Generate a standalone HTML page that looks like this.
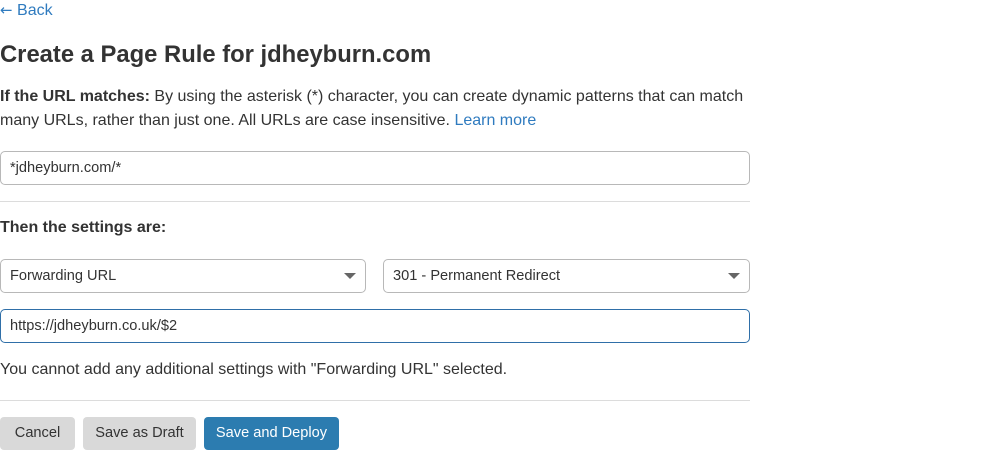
<!DOCTYPE html>
<html><head><style>
body{margin:0;width:986px;height:450px;overflow:hidden;background:#fff;font-family:"Liberation Sans",sans-serif;color:#333;font-size:16px;}
.a{position:absolute;white-space:nowrap}
.box{position:absolute;border:1px solid #b8b8b8;border-radius:5px;box-sizing:border-box;height:34px;line-height:32px;padding-left:9px;font-size:14.6px;color:#333}
.caret{position:absolute;right:9px;top:13px;width:0;height:0;border-left:6px solid transparent;border-right:6px solid transparent;border-top:6px solid #666}
.hr{position:absolute;left:0;width:750px;height:1px;background:#dcdcdc}
.btn{position:absolute;top:417px;height:33px;line-height:33px;border-radius:4px;text-align:center;font-size:14.6px;box-sizing:border-box}
</style></head><body>
<div class="a" style="left:0;top:1px;color:#2f7bbf;font-size:16px"><span style="font-family:'DejaVu Sans';font-size:15px">←</span> Back</div>
<div class="a" style="left:0;top:41px;font-size:23.8px;font-weight:bold;color:#333">Create a Page Rule for jdheyburn.com</div>
<div class="a" style="left:0;top:85px;line-height:24px;font-size:16px"><b>If the URL matches:</b> By using the asterisk (*) character, you can create dynamic patterns that can match<br>many URLs, rather than just one. All URLs are case insensitive. <span style="color:#2f7bbf">Learn more</span></div>
<div class="box" style="left:0;top:151px;width:750px">*jdheyburn.com/*</div>
<div class="hr" style="top:201px"></div>
<div class="a" style="left:0;top:219px;font-weight:bold;font-size:16px">Then the settings are:</div>
<div class="box" style="left:0;top:259px;width:366px">Forwarding URL<div class="caret"></div></div>
<div class="box" style="left:383px;top:259px;width:367px">301 - Permanent Redirect<div class="caret"></div></div>
<div class="box" style="left:0;top:309px;width:750px;border-color:#2f6fa8">https://jdheyburn.co.uk/$2</div>
<div class="a" style="left:0;top:361px;font-size:16px">You cannot add any additional settings with "Forwarding URL" selected.</div>
<div class="hr" style="top:400px"></div>
<div class="btn" style="left:0;width:75px;background:#d9d9d9;color:#333">Cancel</div>
<div class="btn" style="left:83px;width:113px;background:#d9d9d9;color:#333">Save as Draft</div>
<div class="btn" style="left:204px;width:135px;background:#2c7cb0;color:#fff">Save and Deploy</div>
</body></html>
